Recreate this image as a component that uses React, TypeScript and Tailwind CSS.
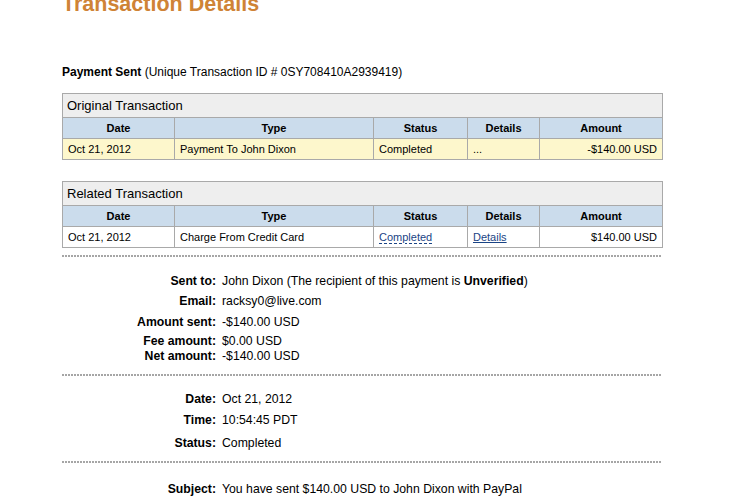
import React from "react";

const font = { fontFamily: '"Liberation Sans", Arial, sans-serif' };

function Dots() {
  return (
    <div className="h-[2px] w-[600px] bg-[repeating-linear-gradient(to_right,#a6a6a6_0px,#a6a6a6_2px,transparent_2px,transparent_3px)]" />
  );
}

type Row = { date: string; type: string; status: React.ReactNode; details: React.ReactNode; amount: string };

function TxTable({ title, row, yellow }: { title: string; row: Row; yellow?: boolean }) {
  const cell = "border border-[#a9a9a9] px-[5px] text-[11px] leading-[13px] text-black";
  const head = "border border-[#a9a9a9] bg-[#cbdcec] text-[11px] leading-[13px] font-bold text-center text-black";
  const bg = yellow ? "bg-[#fdf7cc]" : "bg-white";
  return (
    <table className="w-[600px] border-collapse table-fixed">
      <colgroup>
        <col className="w-[112px]" />
        <col className="w-[199px]" />
        <col className="w-[94px]" />
        <col className="w-[72px]" />
        <col className="w-[123px]" />
      </colgroup>
      <tbody>
        <tr className="h-[24px]">
          <td colSpan={5} className="border border-[#a9a9a9] bg-[#eeeeee] px-[4px] text-[13px] leading-[15px] text-black">
            {title}
          </td>
        </tr>
        <tr className="h-[21px]">
          <td className={head}>Date</td>
          <td className={head}>Type</td>
          <td className={head}>Status</td>
          <td className={head}>Details</td>
          <td className={head}>Amount</td>
        </tr>
        <tr className={`h-[21px] ${bg}`}>
          <td className={cell}>{row.date}</td>
          <td className={cell}>{row.type}</td>
          <td className={cell}>{row.status}</td>
          <td className={cell}>{row.details}</td>
          <td className={`${cell} text-right`}>{row.amount}</td>
        </tr>
      </tbody>
    </table>
  );
}

function Detail({ label, children, h }: { label: string; children: React.ReactNode; h: string }) {
  return (
    <div className={`flex ${h} text-[12.25px] leading-[16px] text-black`}>
      <div className="w-[154px] shrink-0 text-right font-bold">{label}</div>
      <div className="pl-[6px]">{children}</div>
    </div>
  );
}

export default function App() {
  return (
    <div style={font} className="h-[502px] w-[729px] overflow-hidden bg-white pl-[62px]">
      <h1 className="mt-[-6px] text-[21.5px] leading-[21px] font-bold text-[#cf8336]">Transaction Details</h1>
      <p className="mt-[50px] text-[12px] leading-[14px] text-black">
        <span className="font-bold">Payment Sent</span> (Unique Transaction ID # 0SY708410A2939419)
      </p>
      <div className="mt-[14px]">
        <TxTable
          title="Original Transaction"
          yellow
          row={{ date: "Oct 21, 2012", type: "Payment To John Dixon", status: "Completed", details: "...", amount: "-$140.00 USD" }}
        />
      </div>
      <div className="mt-[21px]">
        <TxTable
          title="Related Transaction"
          row={{
            date: "Oct 21, 2012",
            type: "Charge From Credit Card",
            status: (
              <span className="text-[#1a4485] underline decoration-dashed decoration-[#1a4485] underline-offset-2">Completed</span>
            ),
            details: <span className="text-[#1a4485] underline">Details</span>,
            amount: "$140.00 USD",
          }}
        />
      </div>
      <div className="mt-[7px]">
        <Dots />
      </div>
      <div className="pt-[16px] pb-[10px]">
        <Detail label="Sent to:" h="h-[20px]">
          John Dixon (The recipient of this payment is <span className="font-bold">Unverified</span>)
        </Detail>
        <Detail label="Email:" h="h-[21px]">racksy0@live.com</Detail>
        <Detail label="Amount sent:" h="h-[19px]">-$140.00 USD</Detail>
        <Detail label="Fee amount:" h="h-[15px]">$0.00 USD</Detail>
        <Detail label="Net amount:" h="h-[16px]">-$140.00 USD</Detail>
      </div>
      <Dots />
      <div className="pt-[15px] pb-[10px]">
        <Detail label="Date:" h="h-[21px]">Oct 21, 2012</Detail>
        <Detail label="Time:" h="h-[23px]">10:54:45 PDT</Detail>
        <Detail label="Status:" h="h-[16px]">Completed</Detail>
      </div>
      <Dots />
      <div className="pt-[18px]">
        <Detail label="Subject:" h="h-[16px]">You have sent $140.00 USD to John Dixon with PayPal</Detail>
      </div>
    </div>
  );
}
